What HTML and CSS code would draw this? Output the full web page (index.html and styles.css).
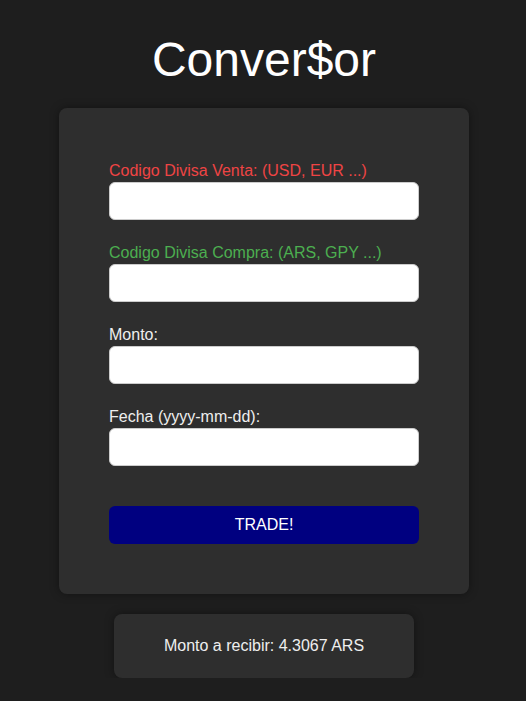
FILE: index.html
```html
<!DOCTYPE html>
<html lang="es">
<head>
<meta charset="utf-8">
<title>Conver$or</title>
<link rel="stylesheet" href="styles.css">
</head>
<body>
<main class="page">
  <h1 class="title">Conver$or</h1>
  <form class="card">
    <div class="field">
      <label class="label label-sell">Codigo Divisa Venta: (USD, EUR ...)</label>
      <input class="input" type="text">
    </div>
    <div class="field">
      <label class="label label-buy">Codigo Divisa Compra: (ARS, GPY ...)</label>
      <input class="input" type="text">
    </div>
    <div class="field">
      <label class="label">Monto:</label>
      <input class="input" type="text">
    </div>
    <div class="field">
      <label class="label">Fecha (yyyy-mm-dd):</label>
      <input class="input" type="text">
    </div>
    <button class="button" type="button">TRADE!</button>
  </form>
  <div class="result">Monto a recibir: 4.3067 ARS</div>
</main>
</body>
</html>
```
FILE: styles.css
```css
html, body {
  margin: 0;
  padding: 0;
  background: #1e1e1e;
  font-family: "Liberation Sans", Arial, sans-serif;
  color: #eeeeee;
}
.page {
  display: flex;
  flex-direction: column;
  align-items: center;
  padding-left: 2px;
}
.title {
  margin: 32px 0 21px;
  font-size: 48px;
  font-weight: normal;
  line-height: 55px;
  color: #ffffff;
}
.card {
  box-sizing: border-box;
  width: 410px;
  padding: 54px 50px 50px;
  background: #2e2e2e;
  border-radius: 8px;
  box-shadow: 0 0 10px rgba(0, 0, 0, 0.4);
  display: flex;
  flex-direction: column;
}
.field {
  display: flex;
  flex-direction: column;
  gap: 2px;
  margin-bottom: 24px;
}
.label {
  font-size: 16px;
  line-height: 18px;
  color: #eeeeee;
}
.label-sell { color: #ef4444; }
.label-buy { color: #4caf50; }
.input {
  box-sizing: border-box;
  height: 38px;
  width: 100%;
  border: 1px solid #cccccc;
  border-radius: 6px;
  background: #ffffff;
  margin: 0;
}
.button {
  margin-top: 16px;
  height: 38px;
  width: 100%;
  border: none;
  border-radius: 6px;
  background: #000080;
  color: #ffffff;
  font-family: "Liberation Sans", Arial, sans-serif;
  font-size: 16px;
}
.result {
  box-sizing: border-box;
  width: 300px;
  height: 64px;
  margin-top: 20px;
  background: #2e2e2e;
  border-radius: 8px;
  box-shadow: 0 0 10px rgba(0, 0, 0, 0.4);
  display: flex;
  align-items: center;
  justify-content: center;
  font-size: 16px;
  color: #eeeeee;
}
```
